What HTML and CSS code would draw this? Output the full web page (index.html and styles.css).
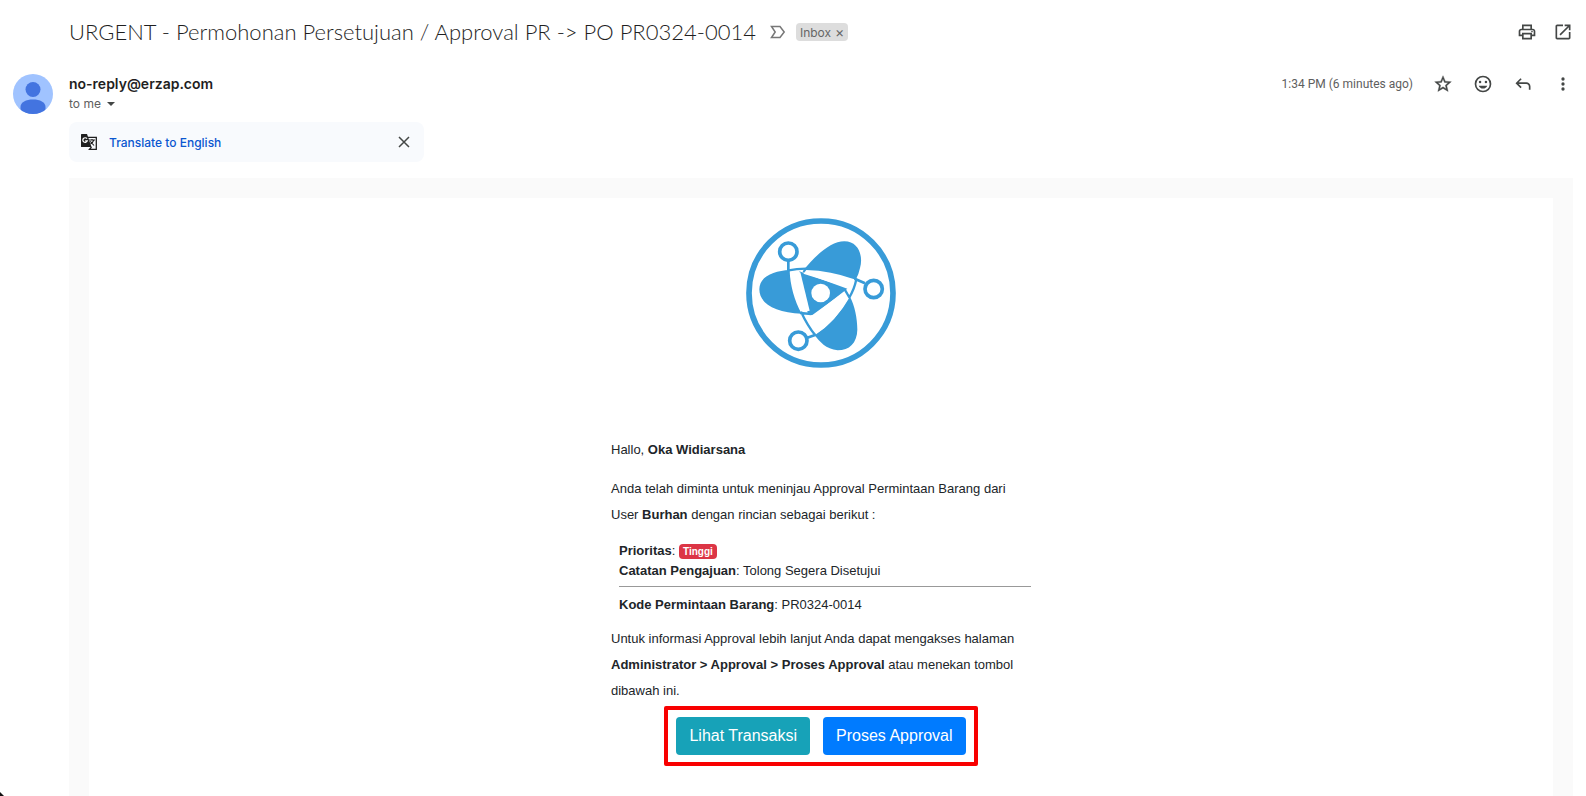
FILE: index.html
```html
<!DOCTYPE html>
<html lang="id">
<head>
    <meta charset="UTF-8">
    <meta name="viewport" content="width=device-width, initial-scale=1.0">
    <title>URGENT - Permohonan Persetujuan / Approval PR</title>
    <link rel="stylesheet" href="styles.css">
</head>
<body>
    <header class="subject-bar">
        <h1>URGENT - Permohonan Persetujuan / Approval PR -&gt; PO PR0324-0014</h1>
        <button class="icon-btn marker" aria-label="Important">
            <svg width="16" height="14" viewBox="0 0 16 14"><path d="M1.5 1.5H10L14.2 7L10 12.5H1.5L5.2 7Z" fill="none" stroke="#777" stroke-width="1.5"/></svg>
        </button>
        <span class="label">Inbox <button aria-label="Remove label">×</button></span>
        <div class="subject-actions">
            <button class="icon-btn" aria-label="Print">
                <svg width="20" height="20" viewBox="0 0 24 24"><path fill="#444746" d="M19 8h-1V3H6v5H5c-1.660 0-3 1.340-3 3v6h4v4h12v-4h4v-6c0-1.660-1.340-3-3-3zM8 5h8v3H8V5zm8 14H8v-4h8v4zm4-4h-2v-2H6v2H4v-4c0-.55.45-1 1-1h14c.55 0 1 .45 1 1v4z"/><circle cx="18" cy="11.500" r="1" fill="#444746"/></svg>
            </button>
            <button class="icon-btn" aria-label="Open in new window">
                <svg width="20" height="20" viewBox="0 0 24 24"><path fill="#444746" d="M19 19H5V5h7V3H5c-1.110 0-2 .9-2 2v14c0 1.100.890 2 2 2h14c1.100 0 2-.9 2-2v-7h-2v7zM14 3v2h3.590l-9.830 9.830 1.410 1.410L19 6.410V10h2V3h-7z"/></svg>
            </button>
        </div>
    </header>

    <main class="message">
        <svg class="avatar" width="40" height="40" viewBox="0 0 40 40">
            <defs><clipPath id="avatarClip"><circle cx="20" cy="20" r="20"/></clipPath></defs>
            <g clip-path="url(#avatarClip)">
                <rect width="40" height="40" fill="#a0c3ff"/>
                <circle cx="20" cy="15.500" r="7.500" fill="#4374e0"/>
                <path d="M7.500 40V33C7.500 28 13 25.500 20 25.500S32.500 28 32.500 33V40Z" fill="#4374e0"/>
            </g>
        </svg>
        <div class="message-body">
            <div class="message-head">
                <div class="sender">
                    <h2>no-reply@erzap.com</h2>
                    <button class="recipient">to me <span class="caret"></span></button>
                </div>
                <div class="message-actions">
                    <time>1:34 PM (6 minutes ago)</time>
                    <button class="icon-btn" aria-label="Star">
                        <svg width="20" height="20" viewBox="0 0 24 24"><path fill="#444746" stroke="#444746" stroke-width=".4" d="M22 9.240l-7.190-.62L12 2 9.190 8.630 2 9.240l5.460 4.730L5.820 21 12 17.270 18.180 21l-1.630-7.030L22 9.240zM12 15.400l-3.760 2.270 1-4.280-3.320-2.880 4.380-.38L12 6.100l1.710 4.040 4.380.38-3.320 2.880 1 4.280L12 15.400z"/></svg>
                    </button>
                    <button class="icon-btn" aria-label="Add reaction">
                        <svg width="20" height="20" viewBox="0 0 24 24"><circle cx="12" cy="12" r="9" fill="none" stroke="#444746" stroke-width="2"/><circle cx="8.500" cy="9.500" r="1.500" fill="#444746"/><circle cx="15.500" cy="9.500" r="1.500" fill="#444746"/><path d="M6.900 14h10.200c-.8 2-2.700 3.500-5.100 3.500s-4.300-1.500-5.100-3.500z" fill="#444746"/></svg>
                    </button>
                    <button class="icon-btn" aria-label="Reply">
                        <svg width="20" height="20" viewBox="0 0 24 24"><path fill="#444746" d="M19 19v-4c0-1.660-1.340-3-3-3H6.830l3.580 3.590L9 17l-6-6 6-6 1.410 1.410L6.830 10H16c2.760 0 5 2.240 5 5v4h-2z"/></svg>
                    </button>
                    <button class="icon-btn" aria-label="More">
                        <svg width="20" height="20" viewBox="0 0 24 24" fill="#444746"><circle cx="12" cy="6" r="2"/><circle cx="12" cy="12" r="2"/><circle cx="12" cy="18" r="2"/></svg>
                    </button>
                </div>
            </div>

            <div class="translate-bar">
                <svg width="18" height="18" viewBox="0 0 18 18">
                    <path d="M1.500 1H7L11.500 14H1.500Q1 14 1 13.500V1.500Q1 1 1.500 1Z" fill="#1f1f1f"/>
                    <path d="M7.500 4.300H16.300V16.300H9.500L11.500 14" fill="none" stroke="#1f1f1f" stroke-width="1.300"/>
                    <path d="M7 5.700A2.300 2.300 0 1 0 7.300 7.800H5.200" fill="none" stroke="#fff" stroke-width="1.200"/>
                    <path d="M9 7H15M12 6V7M13.800 7Q13 9.500 10.500 11M10.300 8.300L14 12.500" fill="none" stroke="#1f1f1f" stroke-width="1.100"/>
                </svg>
                <a href="#">Translate to English</a>
                <button class="icon-btn" aria-label="Close">
                    <svg width="20" height="20" viewBox="0 0 20 20"><path d="M5 5L15 15M15 5L5 15" stroke="#444746" stroke-width="1.500"/></svg>
                </button>
            </div>

            <div class="mail-frame">
                <div class="mail">
                    <svg class="logo" width="150" height="150" viewBox="0 0 450 450">
                        <circle cx="225" cy="225" r="216" fill="#fff" stroke="#389bd8" stroke-width="17"/>
                        <!-- blades -->
                        <g fill="#389bd8">
                            <path d="M170 160C210 110 255 70 295 70C340 70 352 118 342 150Q338 170 329 186L250 180L176 168Z"/>
                            <path d="M40 214C40 175 85 158 131 156C132 200 145 248 167 287C90 284 40 258 40 214Z"/>
                            <path d="M312 236C326 262 334 300 334 335C333 375 310 397 275 397C240 394 220 370 206 352Q270 310 312 236Z"/>
                            <path d="M160 160L304 212L199 294L185 285Z"/>
                        </g>
                        <!-- light strips between the blades -->
                        <g fill="#fff">
                            <path d="M181 156Q255 158 325 184L317 212L172 167Z"/>
                            <path d="M132 163L163 163L191 278L166 283Q140 228 132 163Z"/>
                            <path d="M298 220L307 240Q267 313 210 347Q188 320 172 291L199 291Z"/>
                            <circle cx="224" cy="225" r="28"/>
                        </g>
                        <!-- orbit lines and nodes -->
                        <g fill="none" stroke="#389bd8">
                            <path d="M128 157Q155 151 190 152M165 281Q184 322 208 352M331 184Q325 214 310 238M296 214L311 240M162 285L196 288" stroke-width="7"/>
                            <path d="M127 128V160M326 182L357 196M182 360L209 350" stroke-width="8"/>
                        </g>
                        <g fill="#fff" stroke="#389bd8" stroke-width="11">
                            <circle cx="127" cy="101" r="26"/>
                            <circle cx="383" cy="213" r="26"/>
                            <circle cx="157" cy="368" r="26"/>
                        </g>
                    </svg>

                    <div class="content">
                        <p>Hallo, <b>Oka Widiarsana</b></p>
                        <p>Anda telah diminta untuk meninjau Approval Permintaan Barang dari User <b>Burhan</b> dengan rincian sebagai berikut :</p>
                        <div class="details">
                            <div><b>Prioritas</b>: <span class="badge">Tinggi</span></div>
                            <div><b>Catatan Pengajuan</b>: Tolong Segera Disetujui</div>
                            <hr>
                            <div><b>Kode Permintaan Barang</b>: PR0324-0014</div>
                        </div>
                        <p>Untuk informasi Approval lebih lanjut Anda dapat mengakses halaman <b>Administrator &gt; Approval &gt; Proses Approval</b> atau menekan tombol dibawah ini.</p>
                        <div class="btn-group">
                            <a class="btn btn-info" href="#">Lihat Transaksi</a>
                            <a class="btn btn-primary" href="#">Proses Approval</a>
                        </div>
                    </div>
                </div>
            </div>
        </div>
    </main>
    <div class="corner"></div>
</body>
</html>
```

FILE: styles.css
```css
* {
    box-sizing: border-box;
}
body {
    margin: 0;
    min-height: 100vh;
    display: flex;
    flex-direction: column;
    background-color: #fff;
    color: #1f1f1f;
    font-family: 'Inter', 'Liberation Sans', sans-serif;
}
button {
    border: none;
    background: none;
    padding: 0;
    font: inherit;
    color: inherit;
    cursor: pointer;
}
h1, h2 {
    margin: 0;
}
.icon-btn {
    display: flex;
    align-items: center;
    justify-content: center;
    width: 20px;
    height: 20px;
}
.subject-bar {
    display: flex;
    align-items: center;
    height: 64px;
    padding: 0 13px 0 69px;
}
.subject-bar h1 {
    font-family: 'Lato', sans-serif;
    font-size: 22px;
    font-weight: 300;
    line-height: 28px;
}
.marker {
    margin-left: 12px;
}
.label {
    display: flex;
    align-items: center;
    gap: 4px;
    height: 18px;
    margin-left: 8px;
    padding: 0 4px;
    border-radius: 4px;
    background-color: #ddd;
    color: #666;
    font-size: 12px;
}
.label button {
    font-size: 14px;
    line-height: 16px;
}
.subject-actions {
    display: flex;
    gap: 16px;
    margin-left: auto;
}
.message {
    display: flex;
    flex: 1;
    gap: 16px;
    padding: 10px 13px 0;
}
.avatar {
    flex: none;
}
.message-body {
    display: flex;
    flex: 1;
    flex-direction: column;
}
.message-head {
    display: flex;
    justify-content: space-between;
    height: 48px;
}
.sender h2 {
    font-size: 14px;
    font-weight: 600;
    line-height: 20px;
}
.recipient {
    display: flex;
    align-items: center;
    gap: 6px;
    color: #5e5e5e;
    font-size: 12px;
    line-height: 20px;
}
.caret {
    border: 4px solid transparent;
    border-top-color: #444746;
    border-bottom: none;
}
.message-actions {
    display: flex;
    align-items: center;
    gap: 20px;
    height: 20px;
}
.message-actions time {
    color: #5e5e5e;
    font-family: 'Roboto', sans-serif;
    font-size: 12px;
}
.translate-bar {
    display: flex;
    align-items: center;
    gap: 11px;
    width: 355px;
    height: 40px;
    padding: 0 10px 0 11px;
    border-radius: 8px;
    background-color: #f8fafd;
}
.translate-bar a {
    flex: 1;
    color: #0b57d0;
    font-size: 12px;
    font-weight: 500;
    text-decoration: none;
}
.mail-frame {
    display: flex;
    flex: 1;
    margin-top: 16px;
    padding: 20px 20px 0;
    background-color: #fafafa;
}
.mail {
    flex: 1;
    padding-top: 20px;
    background-color: #fff;
    color: #212529;
    font-family: 'Liberation Sans', Arial, sans-serif;
    font-size: 13px;
}
.logo {
    display: block;
    margin: 0 auto;
}
.content {
    max-width: 420px;
    margin: 69px auto 0;
}
.content p {
    margin: 0 0 13px;
    line-height: 26px;
}
.details {
    margin-bottom: 12px;
    padding-left: 8px;
    line-height: 19px;
}
.details hr {
    margin: 6px 0 8px;
    border: none;
    border-top: 1px solid #999;
}
.badge {
    padding: 2px 4px;
    border-radius: 4px;
    background-color: #dc3545;
    color: #fff;
    font-size: 10px;
    font-weight: 700;
}
.content .btn-group {
    display: flex;
    justify-content: center;
    gap: 13px;
    width: fit-content;
    margin: -11px auto 0;
    padding: 7px 8px;
    border: 4px solid #f80000;
    border-radius: 2px;
}
.btn {
    padding: 7px 13px;
    border-radius: 4px;
    color: #fff;
    font-size: 16px;
    line-height: 24px;
    text-decoration: none;
}
.btn-info {
    background-color: #17a2b8;
}
.btn-primary {
    background-color: #007bff;
}
.corner {
    position: fixed;
    bottom: 0;
    left: 0;
    width: 4px;
    height: 4px;
    background-color: #111;
    clip-path: polygon(0 0, 100% 100%, 0 100%);
}
```
